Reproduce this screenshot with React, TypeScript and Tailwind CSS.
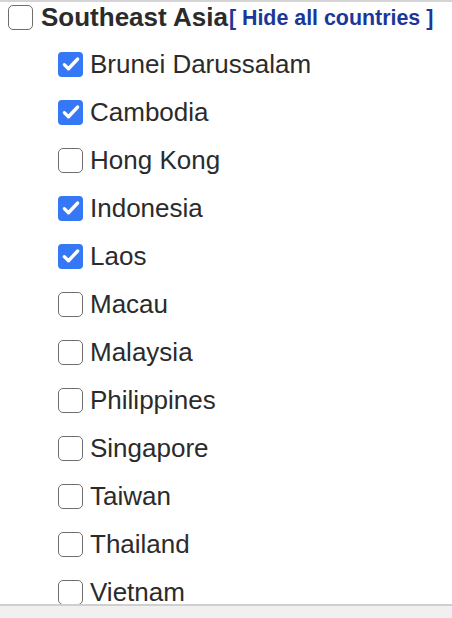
const countries = [
  { name: "Brunei Darussalam", checked: true },
  { name: "Cambodia", checked: true },
  { name: "Hong Kong", checked: false },
  { name: "Indonesia", checked: true },
  { name: "Laos", checked: true },
  { name: "Macau", checked: false },
  { name: "Malaysia", checked: false },
  { name: "Philippines", checked: false },
  { name: "Singapore", checked: false },
  { name: "Taiwan", checked: false },
  { name: "Thailand", checked: false },
  { name: "Vietnam", checked: false },
];

function Box({ checked }: { checked: boolean }) {
  if (checked) {
    return (
      <span className="w-[25px] h-[25px] rounded-[4px] bg-[#3478f6] flex items-center justify-center shrink-0">
        <svg className="w-[20px] h-[20px]" viewBox="0 0 24 24" fill="none" stroke="white" strokeWidth={4} strokeLinecap="round" strokeLinejoin="round">
          <path d="M4 12.8l5 4.9L20 6" />
        </svg>
      </span>
    );
  }
  return <span className="w-[25px] h-[25px] rounded-[5px] border-[1.5px] border-[#6e6e6e] bg-white shrink-0" />;
}

export default function App() {
  return (
    <div className="w-[452px] h-[618px] bg-white overflow-hidden" style={{ fontFamily: '"Liberation Sans", Arial, sans-serif' }}>
      <div className="h-[604px] overflow-hidden border-t-2 border-[#d4d4d4]">
        <div className="h-[30px] flex items-center pl-[8px]">
          <Box checked={false} />
          <span className="ml-[8px] text-[26px] font-bold text-[#2b2b2b]">Southeast Asia</span>
          <a className="text-[21.4px] font-bold text-[#1a3799] ml-[1px] mt-[2px]">[ Hide all countries ]</a>
        </div>
        <div className="mt-[8px]">
          {countries.map((c) => (
            <div key={c.name} className="h-12 flex items-center pl-[58px]">
              <Box checked={c.checked} />
              <span className="ml-[7px] text-[26px] text-[#2b2b2b]">{c.name}</span>
            </div>
          ))}
        </div>
      </div>
      <div className="h-[14px] border-t-2 border-[#cfcfcf] bg-[#f0f0f0]" />
    </div>
  );
}
